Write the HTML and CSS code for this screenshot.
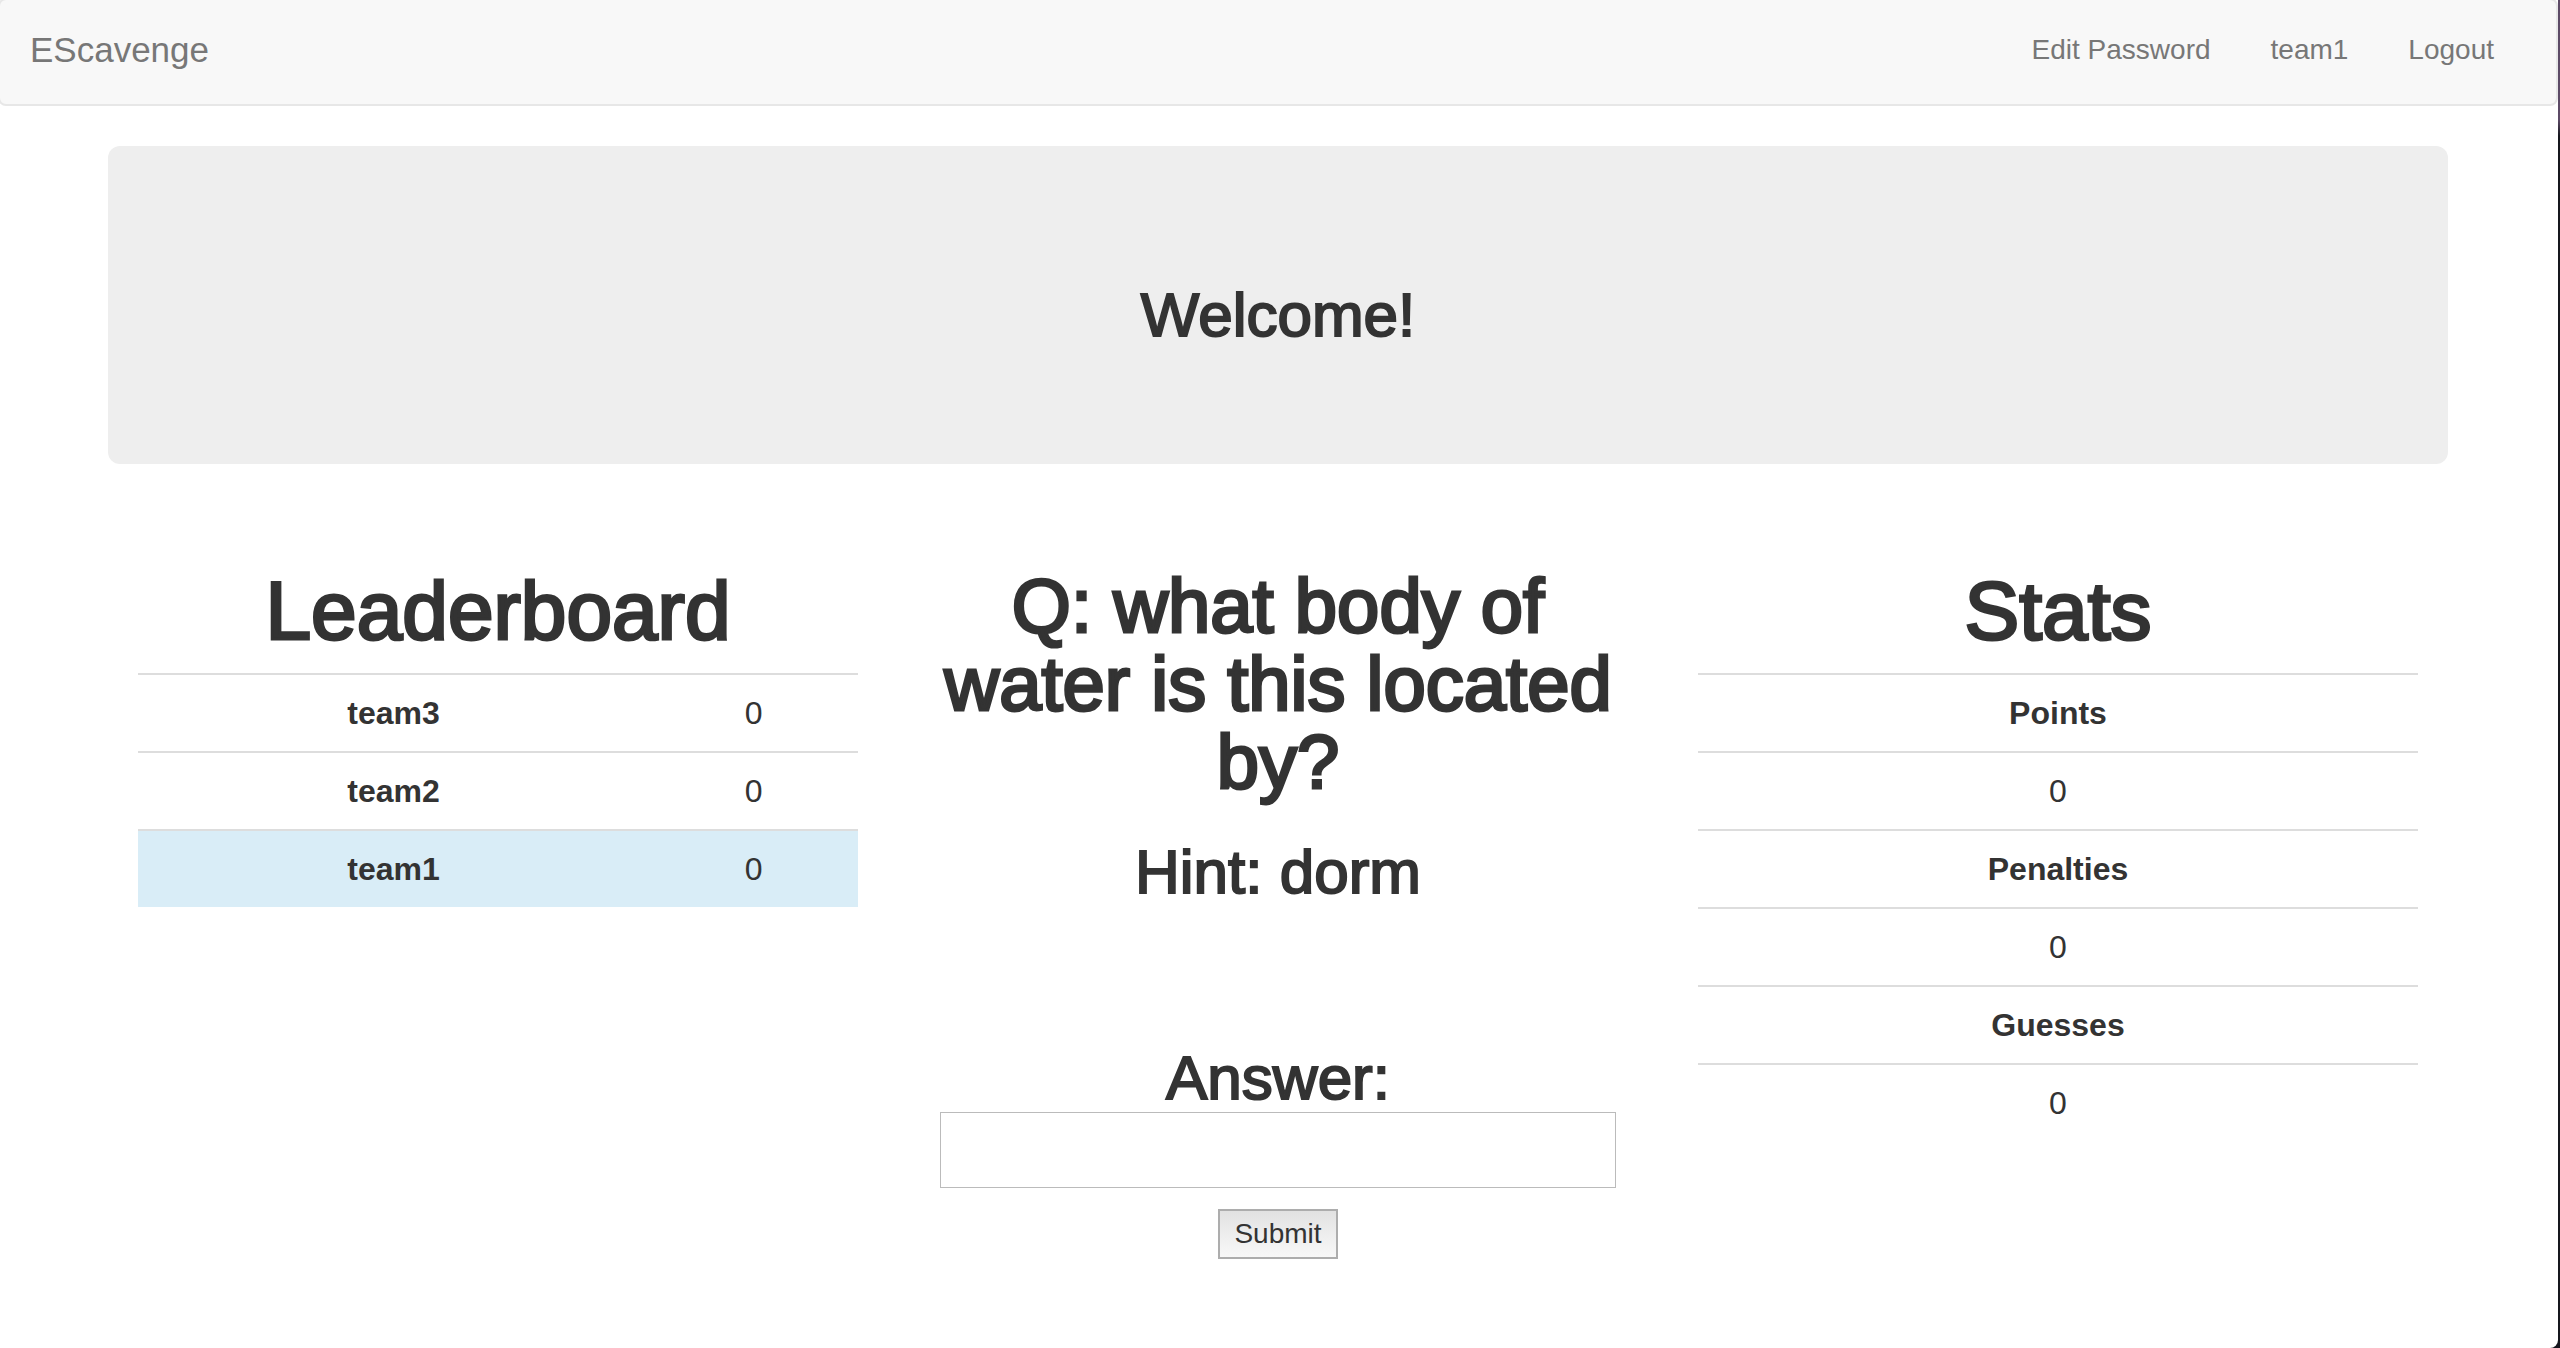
FILE: index.html
```html
<!DOCTYPE html>
<html lang="en">
<head>
<meta charset="utf-8">
<title>EScavenge</title>
<link rel="stylesheet" href="styles.css">
</head>
<body>
<div class="page">
  <nav class="navbar">
    <a class="brand" href="#">EScavenge</a>
    <ul class="nav-links">
      <li><a href="#">Edit Password</a></li>
      <li><a href="#">team1</a></li>
      <li><a href="#">Logout</a></li>
    </ul>
  </nav>
  <main class="container">
    <header class="jumbotron">
      <h2 class="heading heading-md">Welcome!</h2>
    </header>
    <div class="columns">
      <section class="column">
        <h1 class="heading heading-xl">Leaderboard</h1>
        <table class="table">
          <colgroup><col class="col-team"><col class="col-score"></colgroup>
          <tbody>
            <tr><th scope="row">team3</th><td>0</td></tr>
            <tr><th scope="row">team2</th><td>0</td></tr>
            <tr class="current"><th scope="row">team1</th><td>0</td></tr>
          </tbody>
        </table>
      </section>
      <section class="column question">
        <h1 class="heading heading-lg">Q: what body of water is this located by?</h1>
        <h2 class="heading heading-md hint">Hint: dorm</h2>
        <form class="answer-form">
          <label class="heading heading-md" for="answer">Answer:</label>
          <input class="answer-input" type="text" id="answer" name="answer">
          <button class="submit" type="submit">Submit</button>
        </form>
      </section>
      <section class="column">
        <h1 class="heading heading-xl">Stats</h1>
        <table class="table">
          <tbody>
            <tr><th>Points</th></tr>
            <tr><td>0</td></tr>
            <tr><th>Penalties</th></tr>
            <tr><td>0</td></tr>
            <tr><th>Guesses</th></tr>
            <tr><td>0</td></tr>
          </tbody>
        </table>
      </section>
    </div>
  </main>
</div>
</body>
</html>
```
FILE: styles.css
```css
* {
  box-sizing: border-box;
}

body {
  margin: 0;
  background: linear-gradient(#5c4a66 0, #5c4a66 120px, #15161d 136px, #15161d 100%);
  color: #333;
  font-family: "Liberation Sans", Arial, sans-serif;
  font-size: 32px;
  line-height: 44px;
  overflow-x: hidden;
}

.page {
  min-height: 100vh;
  margin-right: 2px;
  background: #fff;
  border-bottom-right-radius: 8px;
  display: flow-root;
}

.navbar {
  display: flex;
  justify-content: space-between;
  margin: -2px 0 40px -2px;
  padding: 0 30px 4px;
  border: 2px solid #e7e7e7;
  border-radius: 8px;
  background: #f8f8f8;
  line-height: 100px;
}

.navbar a {
  color: #777;
  text-decoration: none;
}

.brand {
  font-size: 35px;
}

.nav-links {
  display: flex;
  gap: 60px;
  margin: 0;
  padding: 0 32px 0 0;
  list-style: none;
  font-size: 28px;
}

.container {
  margin: 0 110px 0 108px;
}

.jumbotron {
  padding: 136px 60px 116px;
  border-radius: 12px;
  background: #eee;
  text-align: center;
}

.heading {
  margin: 0;
  font-weight: 400;
  text-align: center;
  -webkit-text-stroke: 2px #333;
}

.heading-xl {
  margin-bottom: 18px;
  font-size: 82px;
  line-height: 88px;
  -webkit-text-stroke-width: 3px;
}

.heading-lg {
  font-size: 76px;
  line-height: 78px;
  -webkit-text-stroke-width: 3px;
}

.heading-md {
  font-size: 62px;
  line-height: 66px;
}

.columns {
  display: grid;
  grid-template-columns: repeat(3, 1fr);
  gap: 60px;
  padding: 103px 30px 60px;
}

.table {
  width: 100%;
  border-collapse: separate;
  border-spacing: 0;
  table-layout: fixed;
  text-align: center;
}

.col-team {
  width: 71%;
}

.table th,
.table td {
  padding: 16px;
  border-top: 2px solid #ddd;
}

.current {
  background: #d9edf7;
}

.question {
  padding: 0 22px;
}

.hint {
  margin: 38px 0 140px;
}

.answer-form {
  display: flex;
  flex-direction: column;
  align-items: center;
}

.answer-input {
  width: 100%;
  height: 76px;
  margin: 1px 0 21px;
  padding: 8px 16px;
  border: 1px solid #bbb;
  background: #fff;
  color: inherit;
  font: inherit;
}

.submit {
  padding: 6px 14px;
  border: 2px solid #adadad;
  border-radius: 0;
  background: linear-gradient(#e2e2e2, #f8f8f8);
  color: #333;
  font-family: inherit;
  font-size: 28px;
  line-height: 34px;
}
```
